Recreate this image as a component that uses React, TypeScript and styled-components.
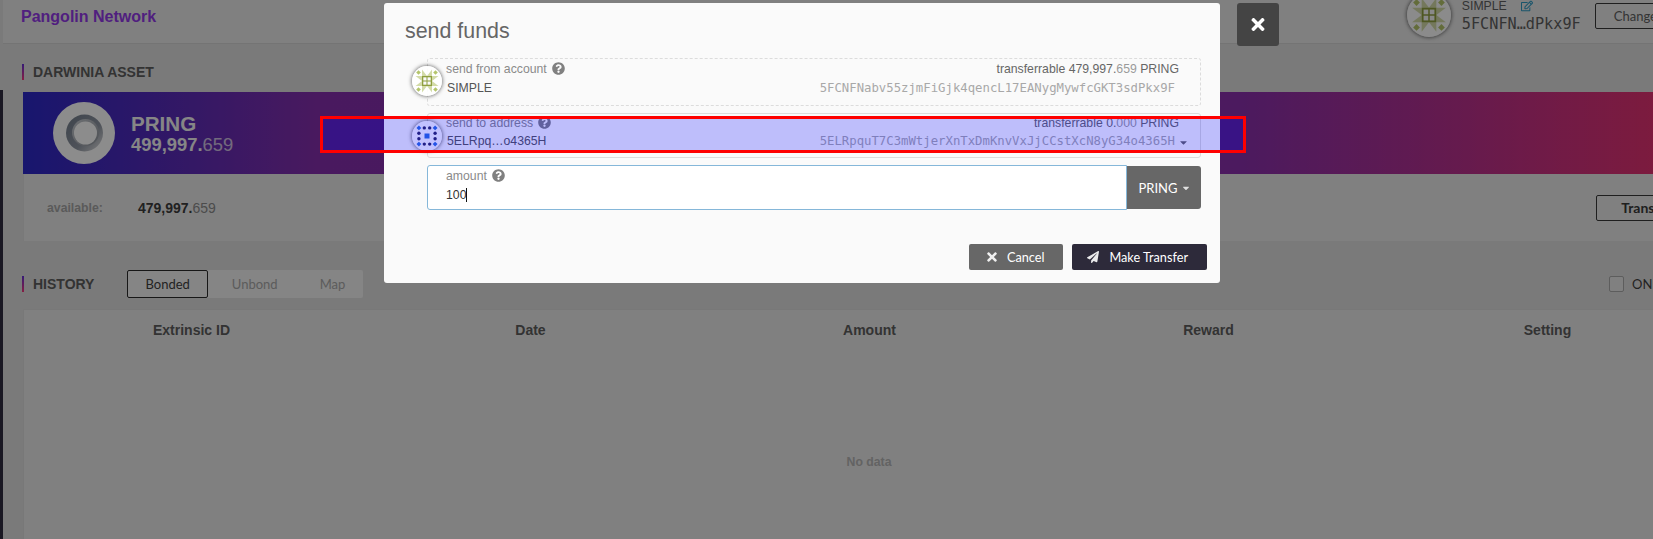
import React from 'react';
import styled, { createGlobalStyle } from 'styled-components';
import {
  FaCaretDown,
  FaPaperPlane,
  FaQuestionCircle,
  FaRegEdit,
  FaTimes,
} from 'react-icons/fa';

const GlobalStyle = createGlobalStyle`
  html, body {
    margin: 0;
    padding: 0;
    background: #dedede;
    font-family: "Liberation Sans", Arial, sans-serif;
  }
`;

const Screen = styled.div`
  position: relative;
  display: flex;
  width: 1653px;
  height: 539px;
  overflow: hidden;
  background: #dedede;
`;

const Rail = styled.div`
  flex: 0 0 3px;
  margin-top: 90px;
  background: #302d40;
`;

const Main = styled.div`
  flex: 0 0 1712px;
  display: flex;
  flex-direction: column;
`;

const Header = styled.header`
  display: flex;
  flex: none;
  justify-content: space-between;
  height: 44px;
  padding: 0 39px 0 18px;
  box-sizing: border-box;
  background: #e9e9e9;
  border-bottom: 1px solid #d4d4d4;
`;

const Brand = styled.div`
  margin-top: 7px;
  font-size: 16px;
  line-height: 19px;
  font-weight: 700;
  color: #9339e8;
`;

const AccountArea = styled.div`
  display: flex;
  align-items: flex-start;
`;

const Avatar = styled.span<{ $size: number }>`
  display: block;
  flex: none;
  width: ${({ $size }) => $size}px;
  height: ${({ $size }) => $size}px;
  border-radius: 50%;
  background: rgba(255, 255, 255, 0.88);
  box-shadow: 0 0 4px rgba(0, 0, 0, 0.7);
  svg {
    display: block;
    width: 100%;
    height: 100%;
  }
`;

const HeaderAvatar = styled(Avatar)`
  margin: -7px 11px 0 0;
`;

const AccountText = styled.div`
  width: 120px;
  margin-right: 13px;
`;

const AccountName = styled.div`
  display: flex;
  justify-content: space-between;
  width: 71px;
  margin-top: -1px;
  font-size: 12.25px;
  line-height: 14px;
  color: #5f5f5f;
  svg {
    width: 12px;
    height: 12px;
    margin-top: 1px;
    color: #2f9bc4;
  }
`;

const AccountAddress = styled.div`
  margin-top: 2px;
  font-family: "DejaVu Sans Mono", monospace;
  font-size: 15.2px;
  line-height: 18px;
  white-space: nowrap;
  color: #5f5f5f;
`;

const OutlineButton = styled.button`
  flex: none;
  box-sizing: border-box;
  height: 26px;
  padding: 0 18px;
  background: transparent;
  border: 1px solid #3a3a3a;
  border-radius: 2px;
  font-family: Lato, sans-serif;
  font-size: 13px;
  color: #606060;
`;

const ChangeButton = styled(OutlineButton)`
  margin-top: 3px;
`;

const Content = styled.main`
  display: flex;
  flex-direction: column;
  padding: 20px 0 0 19px;
`;

const SectionTitle = styled.h2`
  display: flex;
  align-items: center;
  flex: none;
  height: 16px;
  margin: 0;
  padding-left: 9px;
  border-left: 2px solid;
  border-image: linear-gradient(180deg, #5a30dd, #fe3876) 1;
  font-size: 14px;
  line-height: 16px;
  font-weight: 700;
  color: #5d5d5d;
`;

const AssetCard = styled.section`
  margin: 12px 0 0 1px;
  background: #e9e9e9;
`;

const Banner = styled.div`
  display: flex;
  align-items: center;
  gap: 16px;
  height: 82px;
  padding-left: 30px;
  background: linear-gradient(90deg, #2c28c8 0%, #862fad 17.5%, #8a31ad 72%, #f03269 100%);
  color: #f4f4f4;
`;

const TokenCircle = styled.span`
  display: block;
  flex: none;
  width: 62px;
  height: 62px;
  svg {
    display: block;
    width: 100%;
    height: 100%;
  }
`;

const TokenName = styled.div`
  font-size: 20.6px;
  line-height: 23px;
  font-weight: 700;
`;

const TokenAmount = styled.div`
  font-size: 18.4px;
  line-height: 20px;
  font-weight: 700;
  span {
    font-weight: 400;
    opacity: 0.75;
  }
`;

const BalanceRow = styled.div`
  display: flex;
  align-items: center;
  height: 67px;
  padding: 0 18px 0 23px;
  border-left: 1px solid #dcdcdc;
`;

const BalanceLabel = styled.span`
  width: 91px;
  font-size: 12.25px;
  font-weight: 700;
  color: #a5a5a5;
`;

const BalanceValue = styled.span`
  font-size: 14px;
  font-weight: 700;
  color: #3c3c3c;
  span {
    font-weight: 400;
    color: #8a8a8a;
  }
`;

const TransferButton = styled(OutlineButton)`
  margin-left: auto;
  padding: 0 24px;
  font-size: 14px;
  font-weight: 700;
  color: #3a3a3a;
`;

const HistoryRow = styled.div`
  display: flex;
  align-items: center;
  margin-top: 29px;
  height: 28px;
`;

const TabGroup = styled.div`
  display: flex;
  gap: 6px;
  height: 28px;
  margin-left: 33px;
  background: #f2f2f2;
  border-radius: 2px;
`;

const Tab = styled.div<{ $active?: boolean }>`
  display: flex;
  align-items: center;
  box-sizing: border-box;
  padding: 0 17px;
  border: 1px solid ${({ $active }) => ($active ? '#2a2a2a' : 'transparent')};
  border-radius: 2px;
  font-family: Lato, sans-serif;
  font-size: 13px;
  color: ${({ $active }) => ($active ? '#3f3f3f' : '#a8a8a8')};
`;

const OnlyToggle = styled.label`
  display: flex;
  align-items: center;
  gap: 8px;
  width: 106px;
  margin-left: auto;
  font-family: Lato, sans-serif;
  font-size: 13px;
  color: #3f3f3f;
`;

const ToggleBox = styled.span`
  flex: none;
  box-sizing: border-box;
  width: 15px;
  height: 16px;
  border: 1px solid #a9a9a9;
  border-radius: 2px;
  background: #e9e9e9;
`;

const HistoryTable = styled.section`
  flex: none;
  height: 300px;
  margin: 11px 0 0 1px;
  background: #e9e9e9;
  border: 1px solid #dadada;
  border-bottom: 0;
  box-sizing: border-box;
`;

const TableHead = styled.div`
  display: grid;
  grid-template-columns: repeat(5, 1fr);
  margin: 0 -3px 0 -2px;
  padding-top: 12px;
  font-size: 14px;
  line-height: 16px;
  font-weight: 700;
  text-align: center;
  color: #5d5d5d;
`;

const NoData = styled.div`
  margin-top: 117px;
  font-size: 12.25px;
  font-weight: 700;
  line-height: 14px;
  text-align: center;
  color: #b4b4b4;
`;

const Backdrop = styled.div`
  position: absolute;
  inset: 0;
  background: rgba(0, 0, 0, 0.45);
`;

const Modal = styled.div`
  position: absolute;
  left: 384px;
  top: 3px;
  box-sizing: border-box;
  width: 836px;
  height: 280px;
  background: #fafafa;
  border-radius: 3px;
  display: flex;
  flex-direction: column;
`;

const ModalTitle = styled.h1`
  flex: none;
  height: 55px;
  margin: 0;
  padding: 16px 0 0 21px;
  box-sizing: border-box;
  font-size: 21.4px;
  line-height: 25px;
  font-weight: 400;
  color: #666;
`;

const ModalBody = styled.div`
  display: flex;
  flex-direction: column;
  padding: 0 19px 0 43px;
`;

const Field = styled.div<{ $height: number; $top: number; $dashed?: boolean }>`
  position: relative;
  box-sizing: border-box;
  height: ${({ $height }) => $height}px;
  padding: ${({ $top }) => $top}px 21px 0 18px;
  margin-bottom: 7px;
  border: 1px ${({ $dashed }) => ($dashed ? 'dashed' : 'solid')} #dcdcdc;
  border-radius: 3px;
`;

const FieldAvatar = styled(Avatar)`
  position: absolute;
  left: -16px;
  top: 7px;
`;

const FieldRow = styled.div`
  display: flex;
  justify-content: space-between;
  align-items: center;
  height: 15px;
  font-size: 12.25px;
  line-height: 15px;
  color: #8a8a8a;
`;

const ValueRow = styled(FieldRow)<{ $gap: number }>`
  margin-top: ${({ $gap }) => $gap}px;
  padding-left: 1px;
`;

const HelpIcon = styled(FaQuestionCircle)`
  width: 13px;
  height: 13px;
  margin-left: 5px;
  vertical-align: -2px;
  color: #808080;
`;

const Transferrable = styled.span`
  color: #666;
  span {
    color: #9a9a9a;
  }
`;

const AccountValue = styled.span`
  color: #555;
`;

const Address = styled.span`
  display: flex;
  align-items: center;
  margin-right: 4px;
  font-family: "DejaVu Sans Mono", monospace;
  font-size: 12.3px;
  color: #a8a8a8;
`;

const AddressCaret = styled(FaCaretDown)`
  position: absolute;
  right: 12px;
  top: 23px;
  width: 9px;
  height: 11px;
  color: #666;
`;

const AmountRow = styled.div`
  display: flex;
  align-items: center;
  height: 45px;
`;

const AmountInput = styled.div`
  flex: 1;
  box-sizing: border-box;
  height: 45px;
  padding: 3px 18px 0;
  background: #fff;
  border: 1px solid #85b7d9;
  border-radius: 3px 0 0 3px;
`;

const AmountValue = styled.div`
  display: flex;
  align-items: center;
  height: 14px;
  margin-top: 4px;
  font-size: 12.25px;
  line-height: 14px;
  color: #333;
`;

const TextCaret = styled.span`
  width: 1px;
  height: 14px;
  background: #111;
`;

const UnitButton = styled.button`
  display: flex;
  align-items: center;
  justify-content: center;
  gap: 4px;
  flex: none;
  width: 74px;
  height: 43px;
  padding: 0;
  border: 0;
  border-radius: 0 3px 3px 0;
  background: #676767;
  font-family: Lato, sans-serif;
  font-size: 13px;
  color: #fff;
  svg {
    width: 8px;
    height: 10px;
    opacity: 0.8;
  }
`;

const ModalActions = styled.div`
  display: flex;
  justify-content: flex-end;
  gap: 9px;
  margin-top: 34px;
  padding-right: 13px;
`;

const ActionButton = styled.button<{ $primary?: boolean }>`
  display: flex;
  align-items: center;
  gap: 10px;
  height: 26px;
  padding: 0 19px 0 ${({ $primary }) => ($primary ? 15 : 18)}px;
  border: 0;
  border-radius: 2px;
  background: ${({ $primary }) => ($primary ? '#2d2a3a' : '#676767')};
  font-family: Lato, sans-serif;
  font-size: 12.7px;
  color: #fff;
  svg {
    width: ${({ $primary }) => ($primary ? 12 : 10)}px;
    height: 14px;
    opacity: 0.9;
  }
`;

const CloseButton = styled.button`
  position: absolute;
  left: 1237px;
  top: 3px;
  display: flex;
  align-items: center;
  justify-content: center;
  width: 42px;
  height: 43px;
  padding: 0;
  border: 0;
  border-radius: 3px;
  background: #444;
  color: #fff;
  svg {
    width: 14px;
    height: 19px;
  }
`;

const Annotation = styled.div`
  position: absolute;
  left: 320px;
  top: 116px;
  box-sizing: border-box;
  width: 926px;
  height: 37px;
  border: 3px solid #f00;
  background: rgba(0, 0, 255, 0.24);
  background-clip: padding-box;
`;

const Tile: React.FC<{ x: number; y: number; s: number; fill: string }> = ({ x, y, s, fill }) => (
  <rect x={x} y={y} width={s} height={s} fill={fill} />
);

const Diamond: React.FC<{ x: number; y: number; r: number; fill: string }> = ({ x, y, r, fill }) => (
  <polygon points={`${x},${y - r} ${x + r},${y} ${x},${y + r} ${x - r},${y}`} fill={fill} />
);

const OliveIdenticon: React.FC = () => (
  <svg viewBox="0 0 30 30">
    <g fill="#d3dba8">
      <polygon points="10,10 10,3.5 15,10" />
      <polygon points="20,10 20,3.5 15,10" />
      <polygon points="20,10 26.5,10 20,15" />
      <polygon points="20,20 26.5,20 20,15" />
      <polygon points="20,20 20,26.5 15,20" />
      <polygon points="10,20 10,26.5 15,20" />
      <polygon points="10,20 3.5,20 10,15" />
      <polygon points="10,10 3.5,10 10,15" />
    </g>
    {[[6.5, 6.5], [23.5, 6.5], [6.5, 23.5], [23.5, 23.5]].map(([x, y]) => (
      <Diamond key={`${x}-${y}`} x={x} y={y} r={2.3} fill="#b4c56b" />
    ))}
    <Tile x={10} y={10} s={10} fill="#8f9f3f" />
    {[[11.3, 11.3], [15.5, 11.3], [11.3, 15.5], [15.5, 15.5]].map(([x, y]) => (
      <Tile key={`${x}-${y}`} x={x} y={y} s={3.2} fill="#fafafa" />
    ))}
  </svg>
);

const dotPositions = [
  [12.3, 6.9], [17.7, 6.9],
  [6.9, 12.3], [23.1, 12.3], [6.9, 17.7], [23.1, 17.7],
  [12.3, 23.1], [17.7, 23.1],
];

const DotIdenticon: React.FC = () => (
  <svg viewBox="0 0 30 30">
    {dotPositions.map(([x, y]) => (
      <circle key={`${x}-${y}`} cx={x} cy={y} r={1.7} fill="#2c2a63" />
    ))}
    {[[6.9, 6.9], [23.1, 6.9], [6.9, 23.1], [23.1, 23.1]].map(([x, y]) => (
      <Diamond key={`${x}-${y}`} x={x} y={y} r={2.4} fill="#2f6fe0" />
    ))}
    <Tile x={12.5} y={12.5} s={5} fill="#2f6fe0" />
  </svg>
);

const RingToken: React.FC = () => (
  <svg viewBox="0 0 62 62">
    <defs>
      <linearGradient id="ring" x1="0" y1="0" x2="1" y2="1">
        <stop offset="0" stopColor="#727d8c" />
        <stop offset="0.6" stopColor="#8f96a2" />
        <stop offset="1" stopColor="#e5e5e5" />
      </linearGradient>
      <linearGradient id="ringLow" x1="0" y1="0" x2="1" y2="1">
        <stop offset="0" stopColor="#c8ccd2" />
        <stop offset="1" stopColor="#8f949c" />
      </linearGradient>
    </defs>
    <circle cx="31" cy="31" r="31" fill="#fff" />
    <circle cx="31.5" cy="31" r="18.5" fill="url(#ring)" />
    <circle cx="32.5" cy="30.5" r="13.5" fill="url(#ringLow)" />
    <circle cx="32.5" cy="31" r="11.5" fill="#fff" />
  </svg>
);

const columns = ['Extrinsic ID', 'Date', 'Amount', 'Reward', 'Setting'];

export default function App() {
  return (
    <Screen>
      <GlobalStyle />
      <Rail />
      <Main>
        <Header>
          <Brand>Pangolin Network</Brand>
          <AccountArea>
            <HeaderAvatar $size={44}>
              <OliveIdenticon />
            </HeaderAvatar>
            <AccountText>
              <AccountName>
                SIMPLE
                <FaRegEdit />
              </AccountName>
              <AccountAddress>5FCNFN…dPkx9F</AccountAddress>
            </AccountText>
            <ChangeButton>Change</ChangeButton>
          </AccountArea>
        </Header>
        <Content>
          <SectionTitle>DARWINIA ASSET</SectionTitle>
          <AssetCard>
            <Banner>
              <TokenCircle>
                <RingToken />
              </TokenCircle>
              <div>
                <TokenName>PRING</TokenName>
                <TokenAmount>
                  499,997.<span>659</span>
                </TokenAmount>
              </div>
            </Banner>
            <BalanceRow>
              <BalanceLabel>available:</BalanceLabel>
              <BalanceValue>
                479,997.<span>659</span>
              </BalanceValue>
              <TransferButton>Transfer</TransferButton>
            </BalanceRow>
          </AssetCard>
          <HistoryRow>
            <SectionTitle>HISTORY</SectionTitle>
            <TabGroup>
              <Tab $active>Bonded</Tab>
              <Tab>Unbond</Tab>
              <Tab>Map</Tab>
            </TabGroup>
            <OnlyToggle>
              <ToggleBox />
              ONLY
            </OnlyToggle>
          </HistoryRow>
          <HistoryTable>
            <TableHead>
              {columns.map((name) => (
                <div key={name}>{name}</div>
              ))}
            </TableHead>
            <NoData>No data</NoData>
          </HistoryTable>
        </Content>
      </Main>

      <Backdrop />
      <Modal>
        <ModalTitle>send funds</ModalTitle>
        <ModalBody>
          <Field $height={48} $top={3} $dashed>
            <FieldAvatar $size={30}>
              <OliveIdenticon />
            </FieldAvatar>
            <FieldRow>
              <span>
                send from account
                <HelpIcon />
              </span>
              <Transferrable>
                transferrable 479,997.<span>659</span> PRING
              </Transferrable>
            </FieldRow>
            <ValueRow $gap={4}>
              <AccountValue>SIMPLE</AccountValue>
              <Address>5FCNFNabv55zjmFiGjk4qencL17EANygMywfcGKT3sdPkx9F</Address>
            </ValueRow>
          </Field>
          <Field $height={45} $top={2}>
            <FieldAvatar $size={30}>
              <DotIdenticon />
            </FieldAvatar>
            <FieldRow>
              <span>
                send to address
                <HelpIcon />
              </span>
              <Transferrable>
                transferrable 0.<span>000</span> PRING
              </Transferrable>
            </FieldRow>
            <ValueRow $gap={3}>
              <AccountValue>5ELRpq…o4365H</AccountValue>
              <Address>5ELRpquT7C3mWtjerXnTxDmKnvVxJjCCstXcN8yG34o4365H</Address>
            </ValueRow>
            <AddressCaret />
          </Field>
          <AmountRow>
            <AmountInput>
              <FieldRow>
                <span>
                  amount
                  <HelpIcon />
                </span>
              </FieldRow>
              <AmountValue>
                100
                <TextCaret />
              </AmountValue>
            </AmountInput>
            <UnitButton>
              PRING
              <FaCaretDown />
            </UnitButton>
          </AmountRow>
        </ModalBody>
        <ModalActions>
          <ActionButton>
            <FaTimes />
            Cancel
          </ActionButton>
          <ActionButton $primary>
            <FaPaperPlane />
            Make Transfer
          </ActionButton>
        </ModalActions>
      </Modal>
      <CloseButton>
        <FaTimes />
      </CloseButton>
      <Annotation />
    </Screen>
  );
}
